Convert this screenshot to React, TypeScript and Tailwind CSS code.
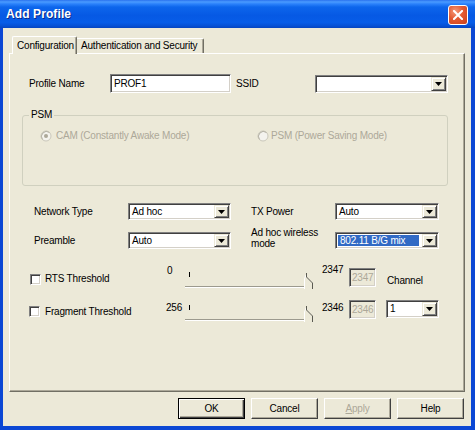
import React from "react";

const sunken =
  "border border-t-[#808080] border-l-[#808080] border-b-white border-r-white shadow-[inset_1px_1px_0_#404040,inset_-1px_-1px_0_#d4d0c8]";

function DropBtn() {
  return (
    <div className="w-[15px] shrink-0 flex items-center justify-center bg-[#ECE9D8] border border-t-[#ECE9D8] border-l-[#ECE9D8] border-b-[#404040] border-r-[#404040] shadow-[inset_1px_1px_0_#ffffff,inset_-1px_-1px_0_#808080]">
      <svg width="7" height="4" viewBox="0 0 7 4">
        <path d="M0 0H7L3.5 4Z" fill="#000" />
      </svg>
    </div>
  );
}

function Combo({
  className,
  value,
  selected,
}: {
  className: string;
  value?: string;
  selected?: boolean;
}) {
  return (
    <div className={`${sunken} bg-white flex items-stretch p-[1px] ${className}`}>
      <div className="flex-1 flex items-stretch min-w-0">
        {value &&
          (selected ? (
            <span className="flex-1 flex items-center bg-[#316AC5] text-white pl-[2px] mt-[1px] mb-[1px] ml-[1px] mr-[3px]">
              {value}
            </span>
          ) : (
            <span className="flex items-center pl-[2px]">{value}</span>
          ))}
      </div>
      <DropBtn />
    </div>
  );
}

function Radio({ checked }: { checked?: boolean }) {
  return (
    <svg width="12" height="12" viewBox="0 0 12 12" className="shrink-0">
      <circle cx="6" cy="6" r="5" fill="#F4F3EE" stroke="#CAC8BB" />
      <path d="M2.5 9.5A5 5 0 0 1 9.5 2.5" fill="none" stroke="#B5B2A5" />
      {checked && <circle cx="6" cy="6" r="2" fill="#ACA899" />}
    </svg>
  );
}

function Checkbox({ className }: { className: string }) {
  return <div className={`w-[11px] h-[11px] shrink-0 bg-white ${sunken} ${className}`} />;
}

function Slider({ className }: { className: string }) {
  return (
    <svg width="130" height="18" viewBox="0 0 130 18" className={`shrink-0 ${className}`}>
      <line x1="4.5" y1="0" x2="4.5" y2="5" stroke="#000" />
      <line x1="0" y1="14.5" x2="122" y2="14.5" stroke="#9C9A8E" />
      <line x1="0" y1="15.5" x2="122" y2="15.5" stroke="#FFFFFF" />
      <path d="M119 17V7L121 2L127 9V17Z" fill="#ECE9D8" />
      <path d="M119.5 17V7L121 3" fill="none" stroke="#FFFFFF" />
      <path d="M121.5 1V5L127.5 11V17" fill="none" stroke="#5A5A52" />
    </svg>
  );
}

function Button({
  children,
  isDefault,
  disabled,
}: {
  children: React.ReactNode;
  isDefault?: boolean;
  disabled?: boolean;
}) {
  return (
    <div
      className={`w-[67px] h-[21px] flex items-center justify-center bg-[#ECE9D8] ${
        isDefault
          ? "border border-black shadow-[inset_1px_1px_0_#ffffff,inset_-1px_-1px_0_#404040,inset_-2px_-2px_0_#ACA899]"
          : "border border-t-white border-l-white border-b-[#404040] border-r-[#404040] shadow-[inset_-1px_-1px_0_#ACA899]"
      } ${disabled ? "text-[#ACA899]" : "text-black"}`}
    >
      {children}
    </div>
  );
}

export default function App() {
  return (
    <div className="w-[475px] h-[430px] flex flex-col bg-[#0B47D4] font-['Liberation_Sans',Arial,sans-serif] text-[10px] tracking-[-0.2px] text-black leading-[12px] overflow-hidden">
      {/* Title bar */}
      <div className="h-[28px] shrink-0 flex items-center pl-[6px] pr-[7px] bg-[linear-gradient(to_bottom,#2a72ee_0%,#4a9bff_7%,#2b82fb_14%,#0d66ec_25%,#0659e4_55%,#075de8_80%,#0651d6_92%,#0645c0_100%)]">
        <span className="text-white font-bold text-[12px] tracking-[0.1px] [text-shadow:1px_1px_0_#0a2a8a]">
          Add Profile
        </span>
        <div className="ml-auto w-[20px] h-[20px] mt-[2px] rounded-[3px] border border-white bg-[radial-gradient(circle_at_35%_30%,#f59a7a_0%,#e35a32_45%,#c8401c_100%)] flex items-center justify-center">
          <svg width="10" height="10" viewBox="0 0 10 10">
            <path d="M1 1L9 9M9 1L1 9" stroke="#fff" strokeWidth="2" strokeLinecap="square" />
          </svg>
        </div>
      </div>

      {/* Body */}
      <div className="flex-1 ml-[3px] mr-[4px] mb-[4px] bg-[#ECE9D8] flex flex-col px-[6px] pt-[8px]">
        {/* Tabs */}
        <div className="h-[17px] flex items-start pl-[3px] relative z-10">
          <div className="w-[65px] h-[18px] flex items-center pl-[4px] bg-[#ECE9D8] border-t border-l border-r border-t-white border-l-white border-r-[#716F64] rounded-tl-[2px] rounded-tr-[2px] shadow-[inset_-1px_0_0_#ACA899]">
            Configuration
          </div>
          <div className="w-[127px] h-[15px] mt-[2px] flex items-center pl-[4px] border-t border-r border-t-white border-r-[#716F64] rounded-tr-[2px] shadow-[inset_-1px_0_0_#ACA899]">
            Authentication and Security
          </div>
        </div>

        {/* Panel */}
        <div className="h-[339px] flex flex-col border border-t-white border-l-white border-r-[#716F64] border-b-[#716F64] shadow-[inset_-1px_-1px_0_#ACA899]">
          {/* Row 1 */}
          <div className="mt-[20px] flex items-center h-[19px] pl-[19px]">
            <span className="w-[81px] shrink-0">Profile Name</span>
            <div className={`w-[121px] h-[19px] shrink-0 bg-white flex items-center pl-[3px] ${sunken}`}>
              PROF1
            </div>
            <span className="ml-[5px] w-[79px] shrink-0">SSID</span>
            <Combo className="w-[133px] h-[18px]" />
          </div>

          {/* PSM group */}
          <fieldset className="mt-[16px] ml-[12px] w-[426px] h-[77px] border border-[#D0D0BF] rounded-[3px]">
            <legend className="ml-[6px] px-[2px] leading-[12px]">PSM</legend>
            <div className="mt-[9px] flex items-center pl-[17px] text-[#ACA899]">
              <div className="w-[217px] flex items-center gap-[4px]">
                <Radio checked />
                <span>CAM (Constantly Awake Mode)</span>
              </div>
              <div className="flex items-center gap-[2px]">
                <Radio />
                <span>PSM (Power Saving Mode)</span>
              </div>
            </div>
          </fieldset>

          {/* Row 3 */}
          <div className="mt-[17px] flex items-center h-[17px] pl-[24px]">
            <span className="w-[94px] shrink-0">Network Type</span>
            <Combo className="w-[103px] h-[17px]" value="Ad hoc" />
            <span className="ml-[20px] w-[84px] shrink-0">TX Power</span>
            <Combo className="w-[104px] h-[17px]" value="Auto" />
          </div>

          {/* Row 4 */}
          <div className="mt-[12px] flex items-center h-[17px] pl-[24px]">
            <span className="w-[94px] shrink-0">Preamble</span>
            <Combo className="w-[103px] h-[17px]" value="Auto" />
            <span className="ml-[20px] w-[84px] shrink-0 leading-[11px] -mt-[5px]">
              Ad hoc wireless
              <br />
              mode
            </span>
            <Combo className="w-[104px] h-[17px]" value="802.11 B/G mix" selected />
          </div>

          {/* Row 5: RTS */}
          <div className="mt-[15px] flex items-start h-[26px] pl-[20px]">
            <Checkbox className="mt-[10px]" />
            <span className="ml-[4px] mt-[9px] w-[121px] shrink-0">RTS Threshold</span>
            <span className="w-[19px] shrink-0 mt-[1px] pl-[1px]">0</span>
            <Slider className="mt-[8px]" />
            <span className="ml-[7px] w-[24px] shrink-0">2347</span>
            <div className={`ml-[3px] mt-[4px] w-[27px] h-[19px] shrink-0 bg-[#ECE9D8] text-[#ACA899] flex items-center pl-[2px] ${sunken}`}>
              2347
            </div>
            <span className="ml-[11px] mt-[11px]">Channel</span>
          </div>

          {/* Row 6: Fragment */}
          <div className="mt-[10px] flex items-start h-[24px] pl-[19px]">
            <Checkbox className="mt-[6px]" />
            <span className="ml-[5px] mt-[6px] w-[121px] shrink-0">Fragment Threshold</span>
            <span className="w-[19px] shrink-0 mt-[2px]">256</span>
            <Slider className="mt-[5px]" />
            <span className="ml-[7px] w-[24px] shrink-0 mt-[2px]">2346</span>
            <div className={`ml-[3px] w-[27px] h-[19px] shrink-0 bg-[#ECE9D8] text-[#ACA899] flex items-center pl-[2px] ${sunken}`}>
              2346
            </div>
            <Combo className="ml-[10px] w-[53px] h-[18px]" value="1" />
          </div>
        </div>

        {/* Buttons */}
        <div className="mt-[6px] flex justify-end gap-[6px] pr-[1px]">
          <Button isDefault>OK</Button>
          <Button>Cancel</Button>
          <Button disabled>
            <span>
              <span className="underline">A</span>pply
            </span>
          </Button>
          <Button>Help</Button>
        </div>
      </div>
    </div>
  );
}
